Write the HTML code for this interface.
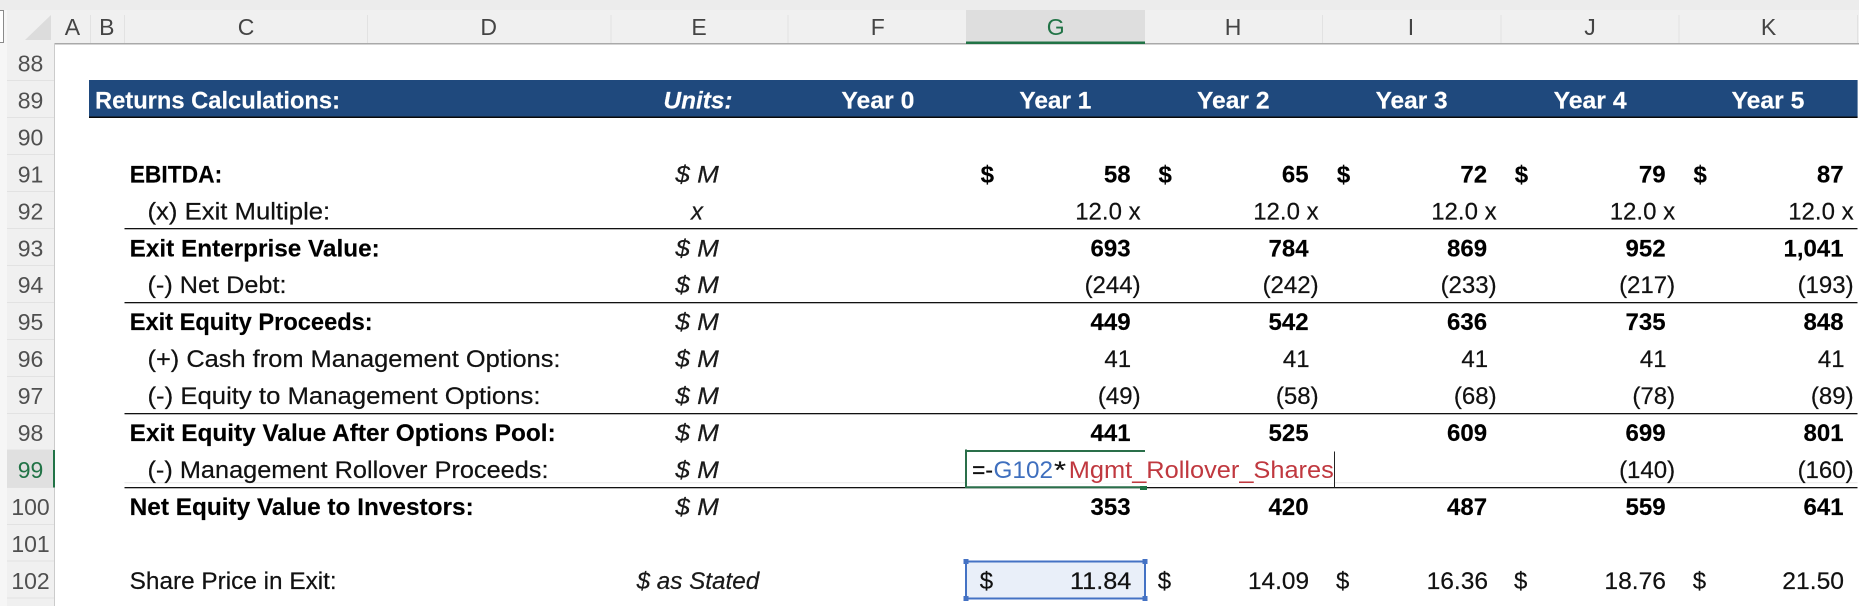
<!DOCTYPE html>
<html><head><meta charset="utf-8"><title>Returns Calculations</title>
<style>
html,body{margin:0;padding:0;background:#fff;width:1859px;height:606px;overflow:hidden}
svg{display:block}
text{font-family:"Liberation Sans",Arial,sans-serif;font-size:24px;fill:#111;stroke:#111;stroke-width:.2px}
.b{font-weight:bold;fill:#000;stroke:#000;stroke-width:.15px}
.i{font-style:italic;fill:#1a1a1a}
.e{text-anchor:end;transform:translateX(.6px)}
.h{font-size:23px;fill:#444;text-anchor:middle;stroke:none}
.r{font-size:23px;fill:#505050;text-anchor:middle;stroke:none}
.w{font-weight:bold;fill:#fff;stroke:#fff;stroke-width:.15px}
</style></head><body>
<svg width="1859" height="606" viewBox="0 0 1859 606" xmlns="http://www.w3.org/2000/svg">
<rect width="1859" height="606" fill="#fff"/>
<!-- column header -->
<rect x="0" y="0" width="1859" height="44" fill="#f0f0f0"/>
<rect x="0" y="0" width="1859" height="10" fill="#ececec"/>
<rect x="0" y="10" width="7" height="596" fill="#f6f6f6"/>
<rect x="-2" y="10.500" width="5.500" height="32" fill="#fff" stroke="#8a8a8a" stroke-width="1"/>
<rect x="7" y="10" width="47" height="596" fill="#f0f0f0"/>
<polygon points="25,40 51,15 51,40" fill="#dcdcdc"/>
<rect x="966" y="10" width="179" height="33" fill="#dedede"/>
<g stroke="#e2e2e2" stroke-width="1">
<path d="M90.500 15V43M124.500 15V43M367.500 15V43M611 15V43M788 15V43M1322.500 15V43M1501 15V43M1679 15V43M1857.500 15V43"/>
</g>
<rect x="54" y="43" width="1805" height="1.500" fill="#a9a9a9"/>
<rect x="966" y="41.500" width="179" height="2.500" fill="#217346"/>
<rect x="54" y="43" width="1" height="563" fill="#cbcbcb"/>
<g stroke="#e2e2e2" stroke-width="1">
<path d="M7 80.500H54M7 117.500H54M7 154.500H54M7 191.500H54M7 228.500H54M7 265.500H54M7 302.500H54M7 339.500H54M7 376.500H54M7 413.500H54M7 450H54M7 487.500H54M7 524.500H54M7 561H54M7 598H54"/>
</g>
<rect x="7" y="450" width="47" height="37.500" fill="#e0e0e0"/>
<rect x="53" y="450" width="2" height="37.500" fill="#217346"/>
<text class="h" x="72.400" y="35">A</text>
<text class="h" x="106.800" y="35">B</text>
<text class="h" x="246" y="35">C</text>
<text class="h" x="488.700" y="35">D</text>
<text class="h" x="699" y="35">E</text>
<text class="h" x="877.800" y="35">F</text>
<text class="h" x="1055.700" y="35" style="fill:#217346">G</text>
<text class="h" x="1233" y="35">H</text>
<text class="h" x="1411" y="35">I</text>
<text class="h" x="1590" y="35">J</text>
<text class="h" x="1768.600" y="35">K</text>
<!-- row numbers -->
<text class="r" x="30.500" y="71.500">88</text>
<text class="r" x="30.500" y="108.500">89</text>
<text class="r" x="30.500" y="145.500">90</text>
<text class="r" x="30.500" y="182.400">91</text>
<text class="r" x="30.500" y="219.300">92</text>
<text class="r" x="30.500" y="256.300">93</text>
<text class="r" x="30.500" y="293.200">94</text>
<text class="r" x="30.500" y="330.200">95</text>
<text class="r" x="30.500" y="367.100">96</text>
<text class="r" x="30.500" y="404.100">97</text>
<text class="r" x="30.500" y="441">98</text>
<text class="r" x="30.500" y="478" style="fill:#217346">99</text>
<text class="r" x="30.500" y="515">100</text>
<text class="r" x="30.500" y="551.900">101</text>
<text class="r" x="30.500" y="589">102</text>
<!-- title bar -->
<rect x="89" y="80" width="1768.600" height="37" fill="#1f497d"/>
<rect x="89" y="116.500" width="1768.600" height="1.500" fill="#0a0a0a"/>
<text class="w" x="95" y="108.500" textLength="245" lengthAdjust="spacingAndGlyphs">Returns Calculations:</text>
<text class="w" x="663.500" y="108.500" textLength="69" lengthAdjust="spacingAndGlyphs" style="font-style:italic">Units:</text>
<text class="w" x="841.400" y="108.500" textLength="73" lengthAdjust="spacingAndGlyphs">Year 0</text>
<text class="w" x="1019.400" y="108.500" textLength="72" lengthAdjust="spacingAndGlyphs">Year 1</text>
<text class="w" x="1197" y="108.500" textLength="72.500" lengthAdjust="spacingAndGlyphs">Year 2</text>
<text class="w" x="1375.600" y="108.500" textLength="72" lengthAdjust="spacingAndGlyphs">Year 3</text>
<text class="w" x="1553.600" y="108.500" textLength="73" lengthAdjust="spacingAndGlyphs">Year 4</text>
<text class="w" x="1731.500" y="108.500" textLength="72.800" lengthAdjust="spacingAndGlyphs">Year 5</text>
<!-- rules -->
<path d="M124.500 482.700H1857.500" stroke="#e8e8e8" stroke-width="1"/>
<g fill="#111">
<rect x="124.500" y="228" width="1733" height="1.300"/>
<rect x="124.500" y="302" width="1733" height="1.300"/>
<rect x="124.500" y="413" width="1733" height="1.300"/>
<rect x="124.500" y="487" width="1733" height="1.300"/>
</g>
<!-- labels -->
<text class="b" x="129.700" y="182.400" textLength="92.500" lengthAdjust="spacingAndGlyphs">EBITDA:</text>
<text x="147.500" y="219.300" textLength="182.700" lengthAdjust="spacingAndGlyphs">(x) Exit Multiple:</text>
<text class="b" x="129.700" y="256.300" textLength="250" lengthAdjust="spacingAndGlyphs">Exit Enterprise Value:</text>
<text x="147.500" y="293.200" textLength="139" lengthAdjust="spacingAndGlyphs">(-) Net Debt:</text>
<text class="b" x="129.700" y="330.200" textLength="243" lengthAdjust="spacingAndGlyphs">Exit Equity Proceeds:</text>
<text x="147.500" y="367.100" textLength="413" lengthAdjust="spacingAndGlyphs">(+) Cash from Management Options:</text>
<text x="147.500" y="404.100" textLength="393" lengthAdjust="spacingAndGlyphs">(-) Equity to Management Options:</text>
<text class="b" x="129.700" y="441" textLength="426" lengthAdjust="spacingAndGlyphs">Exit Equity Value After Options Pool:</text>
<text x="147.500" y="478" textLength="401" lengthAdjust="spacingAndGlyphs">(-) Management Rollover Proceeds:</text>
<text class="b" x="129.700" y="515" textLength="344" lengthAdjust="spacingAndGlyphs">Net Equity Value to Investors:</text>
<text x="129.700" y="589" textLength="207" lengthAdjust="spacingAndGlyphs">Share Price in Exit:</text>
<!-- units -->
<text class="i" x="675.400" y="182.400" textLength="43.500" lengthAdjust="spacingAndGlyphs">$ M</text>
<text class="i" x="691" y="219.300" textLength="12" lengthAdjust="spacingAndGlyphs">x</text>
<text class="i" x="675.400" y="256.300" textLength="43.500" lengthAdjust="spacingAndGlyphs">$ M</text>
<text class="i" x="675.400" y="293.200" textLength="43.500" lengthAdjust="spacingAndGlyphs">$ M</text>
<text class="i" x="675.400" y="330.200" textLength="43.500" lengthAdjust="spacingAndGlyphs">$ M</text>
<text class="i" x="675.400" y="367.100" textLength="43.500" lengthAdjust="spacingAndGlyphs">$ M</text>
<text class="i" x="675.400" y="404.100" textLength="43.500" lengthAdjust="spacingAndGlyphs">$ M</text>
<text class="i" x="675.400" y="441" textLength="43.500" lengthAdjust="spacingAndGlyphs">$ M</text>
<text class="i" x="675.400" y="478" textLength="43.500" lengthAdjust="spacingAndGlyphs">$ M</text>
<text class="i" x="675.400" y="515" textLength="43.500" lengthAdjust="spacingAndGlyphs">$ M</text>
<text class="i" x="636.600" y="589" textLength="122.600" lengthAdjust="spacingAndGlyphs">$ as Stated</text>
<!-- row 91 -->
<text class="b" x="980.600" y="182.400">$</text><text class="b e" x="1130" y="182.400">58</text>
<text class="b" x="1158.500" y="182.400">$</text><text class="b e" x="1308" y="182.400">65</text>
<text class="b" x="1336.900" y="182.400">$</text><text class="b e" x="1486.500" y="182.400">72</text>
<text class="b" x="1514.800" y="182.400">$</text><text class="b e" x="1665" y="182.400">79</text>
<text class="b" x="1693.500" y="182.400">$</text><text class="b e" x="1843" y="182.400">87</text>
<!-- row 92 -->
<text class="e" x="1140" y="219.300">12.0 x</text>
<text class="e" x="1318" y="219.300">12.0 x</text>
<text class="e" x="1496" y="219.300">12.0 x</text>
<text class="e" x="1674.500" y="219.300">12.0 x</text>
<text class="e" x="1853" y="219.300">12.0 x</text>
<!-- row 93 -->
<text class="b e" x="1130" y="256.300">693</text>
<text class="b e" x="1308" y="256.300">784</text>
<text class="b e" x="1486.500" y="256.300">869</text>
<text class="b e" x="1665" y="256.300">952</text>
<text class="b e" x="1843" y="256.300">1,041</text>
<!-- row 94 -->
<text class="e" x="1140" y="293.200">(244)</text>
<text class="e" x="1318" y="293.200">(242)</text>
<text class="e" x="1496" y="293.200">(233)</text>
<text class="e" x="1674.500" y="293.200">(217)</text>
<text class="e" x="1853" y="293.200">(193)</text>
<!-- row 95 -->
<text class="b e" x="1130" y="330.200">449</text>
<text class="b e" x="1308" y="330.200">542</text>
<text class="b e" x="1486.500" y="330.200">636</text>
<text class="b e" x="1665" y="330.200">735</text>
<text class="b e" x="1843" y="330.200">848</text>
<!-- row 96 -->
<text class="e" x="1130.500" y="367.100">41</text>
<text class="e" x="1309" y="367.100">41</text>
<text class="e" x="1487.500" y="367.100">41</text>
<text class="e" x="1666" y="367.100">41</text>
<text class="e" x="1844" y="367.100">41</text>
<!-- row 97 -->
<text class="e" x="1140" y="404.100">(49)</text>
<text class="e" x="1318" y="404.100">(58)</text>
<text class="e" x="1496" y="404.100">(68)</text>
<text class="e" x="1674.500" y="404.100">(78)</text>
<text class="e" x="1853" y="404.100">(89)</text>
<!-- row 98 -->
<text class="b e" x="1130" y="441">441</text>
<text class="b e" x="1308" y="441">525</text>
<text class="b e" x="1486.500" y="441">609</text>
<text class="b e" x="1665" y="441">699</text>
<text class="b e" x="1843" y="441">801</text>
<!-- row 99 -->
<rect x="967" y="451" width="368" height="32" fill="#fff"/>
<text class="e" x="1674.500" y="478">(140)</text>
<text class="e" x="1853" y="478">(160)</text>
<path d="M966 451H1145M966 449.500V488M966 487.200H1140" fill="none" stroke="#2a6f4a" stroke-width="2"/>
<rect x="1140" y="486" width="7" height="4" fill="#217346"/>
<text x="972" y="478" textLength="21" lengthAdjust="spacingAndGlyphs">=-</text>
<text x="993.500" y="478" textLength="59.500" lengthAdjust="spacingAndGlyphs" style="fill:#3f6fbe;stroke:none">G102</text>
<text x="1054" y="478" textLength="12" lengthAdjust="spacingAndGlyphs">*</text>
<text x="1068.800" y="478" textLength="265" lengthAdjust="spacingAndGlyphs" style="fill:#c0383f;stroke:none">Mgmt_Rollover_Shares</text>
<rect x="1334" y="451.500" width="1" height="36" fill="#222"/>
<!-- row 100 -->
<text class="b e" x="1130" y="515">353</text>
<text class="b e" x="1308" y="515">420</text>
<text class="b e" x="1486.500" y="515">487</text>
<text class="b e" x="1665" y="515">559</text>
<text class="b e" x="1843" y="515">641</text>
<!-- row 102 -->
<rect x="966" y="561.500" width="179" height="37" fill="#e9eff9" stroke="#4472c4" stroke-width="2"/>
<g fill="#4472c4">
<rect x="963.500" y="559" width="5" height="5"/><rect x="1142.500" y="559" width="5" height="5"/>
<rect x="963.500" y="596" width="5" height="5"/><rect x="1142.500" y="596" width="5" height="5"/>
</g>
<text x="979.800" y="589">$</text><text x="1070" y="589" textLength="61.300" lengthAdjust="spacingAndGlyphs">11.84</text>
<text x="1157.800" y="589">$</text><text x="1248" y="589" textLength="61" lengthAdjust="spacingAndGlyphs">14.09</text>
<text x="1336" y="589">$</text><text x="1426.600" y="589" textLength="61.400" lengthAdjust="spacingAndGlyphs">16.36</text>
<text x="1514" y="589">$</text><text x="1604.400" y="589" textLength="61.600" lengthAdjust="spacingAndGlyphs">18.76</text>
<text x="1692.700" y="589">$</text><text x="1782.300" y="589" textLength="61.700" lengthAdjust="spacingAndGlyphs">21.50</text>
</svg>
</body></html>
